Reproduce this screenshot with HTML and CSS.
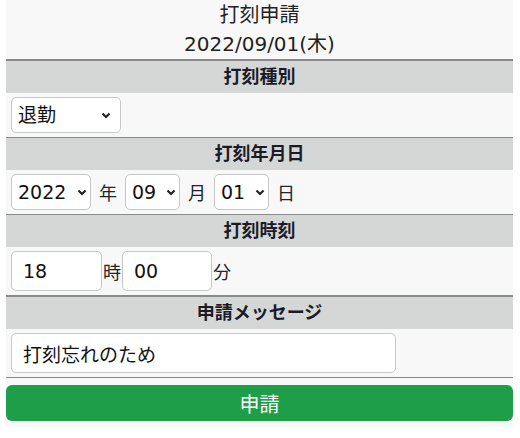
FILE: index.html
```html
<!DOCTYPE html>
<html lang="ja">
<head>
  <meta charset="UTF-8">
  <meta name="viewport" content="width=device-width, initial-scale=1.0">
  <title>打刻申請</title>
  <link rel="stylesheet" href="styles.css">
</head>
<body>
  <div class="page">
    <div class="title">
      <div>打刻申請</div>
      <div>2022/09/01(木)</div>
    </div>

    <div class="head head-thick">打刻種別</div>
    <div class="row">
      <select class="sel sel-kind">
        <option>退勤</option>
        <option>出勤</option>
      </select>
    </div>

    <div class="head">打刻年月日</div>
    <div class="row">
      <select class="sel sel-year"><option>2022</option></select>
      <span class="unit unit-wide">年</span>
      <select class="sel sel-small"><option>09</option></select>
      <span class="unit unit-wide">月</span>
      <select class="sel sel-small"><option>01</option></select>
      <span class="unit unit-wide">日</span>
    </div>

    <div class="head">打刻時刻</div>
    <div class="row">
      <input class="txt txt-hour" type="text" value="18">
      <span class="unit">時</span>
      <input class="txt txt-min" type="text" value="00">
      <span class="unit">分</span>
    </div>

    <div class="head head-thick">申請メッセージ</div>
    <div class="row row-last">
      <input class="txt txt-msg" type="text" value="打刻忘れのため">
    </div>

    <button class="submit">申請</button>
  </div>
</body>
</html>
```

FILE: styles.css
```css
body {
  margin: 0;
  background: #fff;
  font-family: "DejaVu Sans", "Noto Sans CJK JP", sans-serif;
  color: #212529;
}
.page {
  margin-left: 6px;
  width: 507px;
  background: #f8f8f8;
  padding-bottom: 6px;
}
.title {
  padding-top: 1px;
  text-align: center;
  font-size: 20px;
  line-height: 29px;
  color: #222;
}
.head {
  border-top: 1px solid #8a8a8a;
  background: #d5d7d6;
  height: 32px;
  line-height: 32px;
  text-align: center;
  font-size: 18px;
  font-weight: bold;
  color: #1b1b28;
}
.head-thick {
  border-top-width: 2px;
}
.row {
  display: flex;
  align-items: center;
  padding: 4px 5px;
  font-size: 18px;
}
.row-last {
  border-bottom: 1px solid #8a8a8a;
}
.sel {
  -webkit-appearance: none;
  appearance: none;
  height: 36px;
  border: 1px solid #c8c8c8;
  border-radius: 5px;
  background-color: #fff;
  background-image: url("data:image/svg+xml;utf8,<svg xmlns='http://www.w3.org/2000/svg' width='10' height='7' viewBox='0 0 10 7'><path d='M1.5 1.5 L5 5 L8.5 1.5' fill='none' stroke='%23222' stroke-width='2.2'/></svg>");
  background-repeat: no-repeat;
  background-position: right 3px center;
  font-family: inherit;
  font-size: 19px;
  color: #111;
  padding: 0 0 0 6px;
}
.sel-kind {
  width: 110px;
  background-position: right 9px center;
}
.sel-year {
  width: 80px;
}
.sel-small {
  width: 55px;
}
.unit {
  margin: 0 1px;
}
.unit-wide {
  margin: 0 8px;
}
.txt {
  height: 40px;
  box-sizing: border-box;
  border: 1px solid #c8c8c8;
  border-radius: 5px;
  background: #fff;
  font-family: inherit;
  font-size: 19px;
  color: #111;
  padding: 0 11px;
}
.txt-hour {
  width: 91px;
}
.txt-min {
  width: 90px;
}
.txt-msg {
  width: 385px;
}
.submit {
  display: block;
  width: 100%;
  height: 36px;
  margin-top: 7px;
  border: none;
  border-radius: 6px;
  background: #1f9e4a;
  color: #fff;
  font-family: inherit;
  font-size: 20px;
}
```
